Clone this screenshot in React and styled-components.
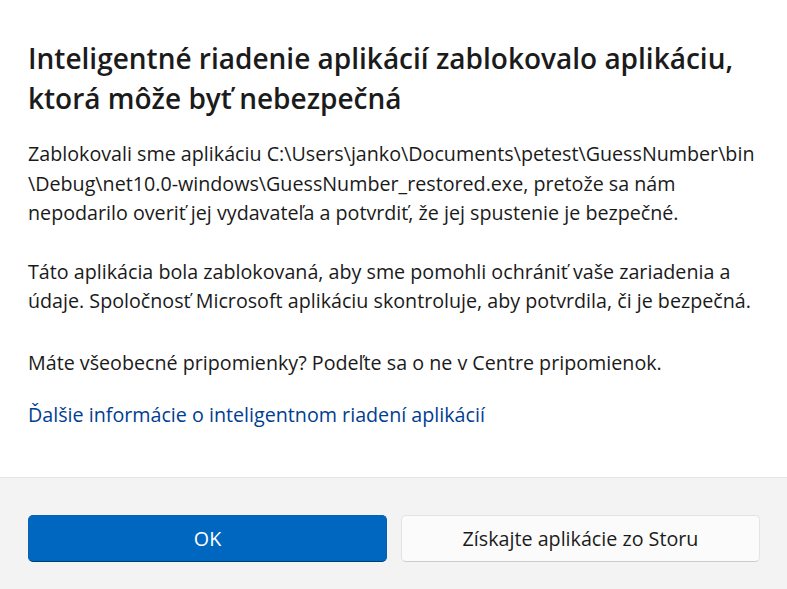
import React from 'react'
import styled, { createGlobalStyle } from 'styled-components'

const GlobalStyle = createGlobalStyle`
  html, body {
    margin: 0;
    padding: 0;
    background: #ffffff;
  }
  body {
    font-family: "Open Sans", "Noto Sans", sans-serif;
  }
`

const Dialog = styled.div`
  display: flex;
  flex-direction: column;
  width: 787px;
  height: 589px;
  background: #ffffff;
  color: #1a1a1a;
`

const Content = styled.div`
  flex: 1;
  padding: 38px 0 0 28px;
`

const Title = styled.h1`
  margin: 0 0 21px 0;
  font-size: 28px;
  font-weight: 600;
  line-height: 40px;
  color: #1b1b1b;
  white-space: nowrap;
`

const Paragraph = styled.p`
  margin: 0 0 ${p => p.$gap || 29}px 0;
  font-size: 19.7px;
  line-height: 29.5px;
  white-space: nowrap;
`

const Link = styled.a`
  display: block;
  font-size: 19.7px;
  line-height: 29.5px;
  color: #003e92;
  text-decoration: none;
`

const Footer = styled.div`
  display: grid;
  grid-template-columns: 1fr 1fr;
  gap: 14px;
  height: 112px;
  padding: 37px 27px 0 28px;
  box-sizing: border-box;
  background: #f3f3f3;
  border-top: 1px solid #e5e5e5;
`

const Button = styled.button`
  height: 47px;
  border-radius: 5px;
  font-family: inherit;
  font-size: 19.7px;
  cursor: pointer;
  border: 1px solid ${p => (p.$primary ? '#0a5fae' : '#e3e3e3')};
  border-bottom-color: ${p => (p.$primary ? '#003e73' : '#cccccc')};
  background: ${p => (p.$primary ? '#0067c0' : '#fbfbfb')};
  color: ${p => (p.$primary ? '#ffffff' : '#1b1b1b')};
`

const App = () => (
  <Dialog>
    <GlobalStyle />
    <Content>
      <Title>
        Inteligentné riadenie aplikácií zablokovalo aplikáciu,
        <br />
        ktorá môže byť nebezpečná
      </Title>
      <Paragraph>
        Zablokovali sme aplikáciu C:\Users\janko\Documents\petest\GuessNumber\bin
        <br />
        \Debug\net10.0-windows\GuessNumber_restored.exe, pretože sa nám
        <br />
        nepodarilo overiť jej vydavateľa a potvrdiť, že jej spustenie je bezpečné.
      </Paragraph>
      <Paragraph $gap={32}>
        Táto aplikácia bola zablokovaná, aby sme pomohli ochrániť vaše zariadenia a
        <br />
        údaje. Spoločnosť Microsoft aplikáciu skontroluje, aby potvrdila, či je bezpečná.
      </Paragraph>
      <Paragraph $gap={23}>
        Máte všeobecné pripomienky? Podeľte sa o ne v Centre pripomienok.
      </Paragraph>
      <Link href="#">Ďalšie informácie o inteligentnom riadení aplikácií</Link>
    </Content>
    <Footer>
      <Button $primary>OK</Button>
      <Button>Získajte aplikácie zo Storu</Button>
    </Footer>
  </Dialog>
)

export default App
